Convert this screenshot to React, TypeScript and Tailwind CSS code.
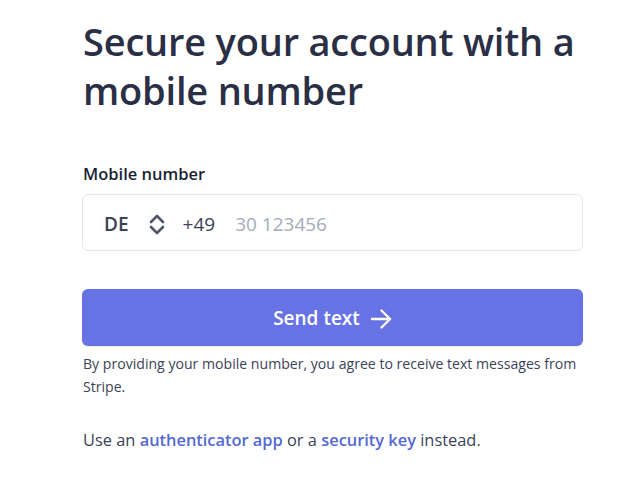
// Chevron up/down used by the country picker
function UpDown() {
  return (
    <svg width="16" height="21" viewBox="0 0 16 21" fill="none" stroke="#4f566b" strokeWidth="2.6" strokeLinecap="round" strokeLinejoin="round">
      <path d="M2 8 8 2l6 6" />
      <path d="M2 13l6 6 6-6" />
    </svg>
  );
}

function Arrow() {
  return (
    <svg width="22" height="20" viewBox="0 0 22 20" fill="none" stroke="currentColor" strokeWidth="2.4" strokeLinecap="round" strokeLinejoin="round">
      <path d="M2 10h18" />
      <path d="M11.5 1.5 20 10l-8.5 8.5" />
    </svg>
  );
}

export default function App() {
  return (
    <div className="min-h-screen w-full bg-white" style={{ fontFamily: "'Open Sans', 'Noto Sans', sans-serif" }}>
      <div className="w-[501px] ml-[82px] pt-[17px]">
        <h1 className="text-[38px] leading-[49px] font-semibold tracking-[-0.2px] text-[#2a2f45] pl-[1px]">
          Secure your account with a mobile number
        </h1>

        <label className="block mt-[48px] text-[16.5px] leading-[22px] font-semibold text-[#1a1f36] pl-[1px]">
          Mobile number
        </label>

        <div className="mt-[9px] h-[57px] rounded-[6px] border border-[#e3e8ee] flex items-center pl-[21px] pt-[3px] text-[19px]">
          <span className="font-semibold text-[#3c4257]">DE</span>
          <span className="ml-[20px] flex items-center"><UpDown /></span>
          <span className="ml-[18px] text-[#3c4257]">+49</span>
          <span className="ml-[20px] text-[#a3acb9]">30 123456</span>
        </div>

        <button className="mt-[38px] w-full h-[57px] rounded-[6px] bg-[#6772e5] text-white text-[19px] font-semibold flex items-center justify-center gap-[10px] pt-[2px] shadow-[0_1px_2px_rgba(0,0,0,0.08)]">
          Send text
          <Arrow />
        </button>

        <p className="mt-[6px] text-[14.1px] leading-[23px] text-[#3c4257] pl-[1px]">
          By providing your mobile number, you agree to receive text messages from Stripe.
        </p>

        <p className="mt-[30px] text-[16.4px] leading-[24px] text-[#3c4257] pl-[1px]">
          Use an <a className="font-semibold text-[#5469d4]">authenticator app</a> or a{" "}
          <a className="font-semibold text-[#5469d4]">security key</a> instead.
        </p>
      </div>
    </div>
  );
}
